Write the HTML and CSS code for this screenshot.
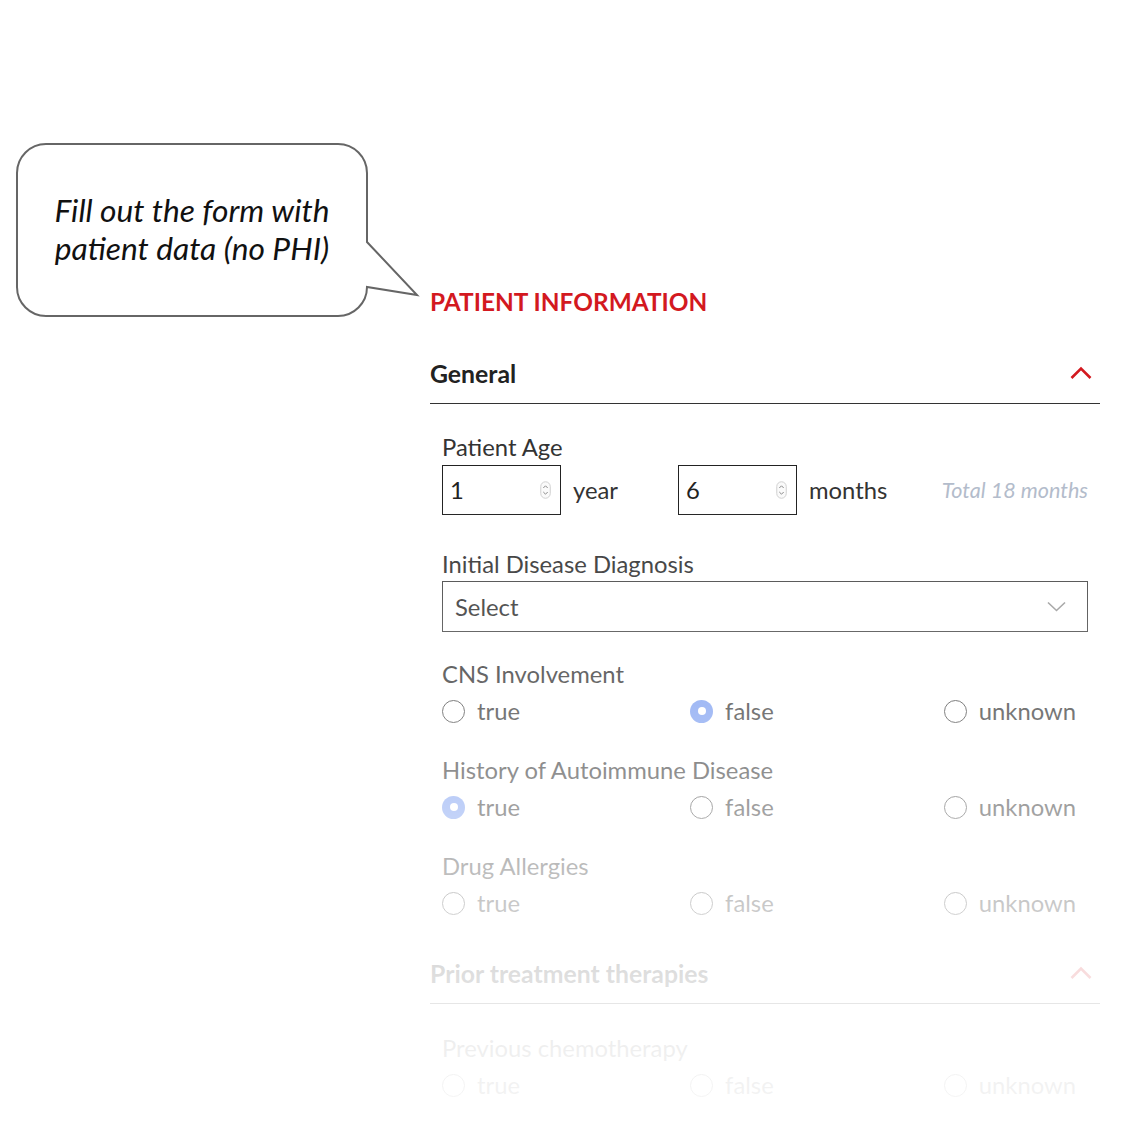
FILE: index.html
```html
<!DOCTYPE html>
<html lang="en">
<head>
<meta charset="utf-8">
<title>Patient Information</title>
<link rel="stylesheet" href="styles.css">
</head>
<body>
<div class="page">
  <div class="callout">
    <svg class="callout-shape" width="420" height="190" viewBox="0 0 420 190">
      <path d="M46 1 H338 A29 29 0 0 1 367 30 V99 L417 152 L367 144 A29 29 0 0 1 338 173 H46 A29 29 0 0 1 17 144 V30 A29 29 0 0 1 46 1 Z" fill="#fff" stroke="#666" stroke-width="2"/>
    </svg>
    <p class="callout-text">Fill out the form with<br>patient data (no PHI)</p>
  </div>

  <main class="form">
    <h1 class="form-title">PATIENT INFORMATION</h1>

    <section class="section">
      <header class="section-head">
        <h2 class="section-title">General</h2>
        <svg class="chev-up" width="22" height="14" viewBox="0 0 22 14"><path d="M1.5 12 L11 2.5 L20.5 12" fill="none" stroke="#d3191f" stroke-width="2.6"/></svg>
      </header>
      <div class="section-body">
        <div class="field">
          <div class="label">Patient Age</div>
          <div class="age-row">
            <div class="age-unit">
              <div class="num-box"><span>1</span>
                <svg class="spin" width="11" height="18" viewBox="0 0 11 18"><rect x="0.75" y="0.75" width="9.5" height="16.5" rx="4.75" fill="#fafafa" stroke="#d0d0d0" stroke-width="1"/><path d="M3.3 7 L5.5 4.8 L7.7 7 M3.3 11 L5.5 13.2 L7.7 11" fill="none" stroke="#8a8a8a" stroke-width="1"/></svg>
              </div>
              <span class="unit">year</span>
            </div>
            <div class="age-unit">
              <div class="num-box"><span>6</span>
                <svg class="spin" width="11" height="18" viewBox="0 0 11 18"><rect x="0.75" y="0.75" width="9.5" height="16.5" rx="4.75" fill="#fafafa" stroke="#d0d0d0" stroke-width="1"/><path d="M3.3 7 L5.5 4.8 L7.7 7 M3.3 11 L5.5 13.2 L7.7 11" fill="none" stroke="#8a8a8a" stroke-width="1"/></svg>
              </div>
              <span class="unit">months</span>
            </div>
            <span class="total">Total 18 months</span>
          </div>
        </div>

        <div class="field field-select">
          <div class="label">Initial Disease Diagnosis</div>
          <div class="select">
            <span>Select</span>
            <svg width="19" height="11" viewBox="0 0 19 11"><path d="M1 1.5 L9.5 9.5 L18 1.5" fill="none" stroke="#999" stroke-width="1.6"/></svg>
          </div>
        </div>

        <div class="field field-radio">
          <div class="label">CNS Involvement</div>
          <div class="radio-row">
            <span class="radio"><span class="dot"></span>true</span>
            <span class="radio"><span class="dot on"></span>false</span>
            <span class="radio"><span class="dot"></span>unknown</span>
          </div>
        </div>

        <div class="field field-radio">
          <div class="label">History of Autoimmune Disease</div>
          <div class="radio-row">
            <span class="radio"><span class="dot on"></span>true</span>
            <span class="radio"><span class="dot"></span>false</span>
            <span class="radio"><span class="dot"></span>unknown</span>
          </div>
        </div>

        <div class="field field-radio">
          <div class="label">Drug Allergies</div>
          <div class="radio-row">
            <span class="radio"><span class="dot"></span>true</span>
            <span class="radio"><span class="dot"></span>false</span>
            <span class="radio"><span class="dot"></span>unknown</span>
          </div>
        </div>
      </div>
    </section>

    <section class="section section-2">
      <header class="section-head">
        <h2 class="section-title">Prior treatment therapies</h2>
        <svg class="chev-up" width="22" height="14" viewBox="0 0 22 14"><path d="M1.5 12 L11 2.5 L20.5 12" fill="none" stroke="#d3191f" stroke-width="2.6"/></svg>
      </header>
      <div class="section-body">
        <div class="field field-radio first">
          <div class="label">Previous chemotherapy</div>
          <div class="radio-row">
            <span class="radio"><span class="dot"></span>true</span>
            <span class="radio"><span class="dot"></span>false</span>
            <span class="radio"><span class="dot"></span>unknown</span>
          </div>
        </div>
      </div>
    </section>
  </main>

  <div class="fade"></div>
</div>
</body>
</html>
```

FILE: styles.css
```css
* { box-sizing: border-box; }

html, body {
  margin: 0;
  padding: 0;
  background: #fff;
}

body {
  font-family: Lato, "Open Sans", "Liberation Sans", sans-serif;
  color: #333;
  width: 1146px;
  height: 1146px;
  overflow: hidden;
}

.page {
  position: relative;
  width: 1146px;
  height: 1146px;
}

/* speech bubble */
.callout {
  position: absolute;
  left: 0;
  top: 143px;
  width: 420px;
  height: 190px;
}

.callout-shape {
  position: absolute;
  left: 0;
  top: 0;
}

.callout-text {
  position: absolute;
  left: 17px;
  top: 1px;
  width: 350px;
  height: 172px;
  margin: 0;
  display: flex;
  align-items: center;
  justify-content: center;
  text-align: center;
  font-style: italic;
  font-size: 31.7px;
  line-height: 38px;
  color: #111;
  padding-bottom: 2px;
}

/* form */
.form {
  margin-left: 430px;
  width: 670px;
  padding-top: 287px;
}

.form-title {
  margin: 0;
  font-size: 24.4px;
  line-height: 30px;
  font-weight: 700;
  color: #d3191f;
}

.section-head {
  display: flex;
  align-items: center;
  justify-content: space-between;
  height: 59px;
  border-bottom: 1px solid #333;
  padding-right: 8px;
  margin-top: 28px;
}

.chev-up { margin-top: -2px; }

.section-title {
  margin: 0;
  font-size: 24.8px;
  line-height: 30px;
  font-weight: 700;
  color: #222;
}

.section-body {
  padding: 0 12px;
}

.field {
  padding-top: 30px;
}

.label {
  font-size: 23.8px;
  line-height: 26px;
  color: #333;
}

.age-row {
  display: flex;
  align-items: center;
  margin-top: 5px;
}

.age-unit {
  display: flex;
  align-items: center;
  gap: 12px;
}

.age-unit + .age-unit { margin-left: 60px; }

.num-box {
  width: 119px;
  height: 50px;
  border: 1.5px solid #222;
  display: flex;
  align-items: center;
  justify-content: space-between;
  padding: 0 9px 0 7px;
  font-size: 23.8px;
  color: #222;
}

.spin { display: block; }

.unit {
  font-size: 23.8px;
  color: #333;
}

.total {
  margin-left: auto;
  font-size: 21.6px;
  font-style: italic;
  color: #b3bccb;
}

.field-select { padding-top: 36px; }

.select {
  margin-top: 4px;
  height: 51px;
  border: 1.5px solid #444;
  display: flex;
  align-items: center;
  justify-content: space-between;
  padding: 0 21px 0 12px;
  font-size: 23.8px;
  color: #333;
}

.select svg { display: block; }

.field-radio { padding-top: 29px; }
.field-radio + .field-radio { padding-top: 31px; }
.field-radio.first { padding-top: 31px; }

.radio-row {
  display: flex;
  justify-content: space-between;
  margin-top: 9px;
  padding-right: 12px;
}

.radio {
  display: flex;
  align-items: center;
  gap: 12px;
  font-size: 23.8px;
  line-height: 30px;
  color: #333;
}

.dot {
  width: 23px;
  height: 23px;
  border-radius: 50%;
  border: 1.5px solid #444;
  background: #fff;
  position: relative;
}

.dot.on {
  border: none;
  background: #789bf0;
}

.dot.on::after {
  content: "";
  position: absolute;
  left: 7.5px;
  top: 7.5px;
  width: 8px;
  height: 8px;
  border-radius: 50%;
  background: #fff;
}

.section-2 .section-head { margin-top: 27px; }

/* fade-out veil over the lower part of the form */
.fade {
  position: absolute;
  left: 0;
  top: 0;
  width: 1146px;
  height: 1146px;
  pointer-events: none;
  background: linear-gradient(to bottom,
    rgba(255,255,255,0) 0px,
    rgba(255,255,255,0) 500px,
    rgba(255,255,255,0.1) 564px,
    rgba(255,255,255,0.25) 675px,
    rgba(255,255,255,0.45) 771px,
    rgba(255,255,255,0.67) 867px,
    rgba(255,255,255,0.85) 974px,
    rgba(255,255,255,0.92) 1048px,
    rgba(255,255,255,0.96) 1146px);
}
```
